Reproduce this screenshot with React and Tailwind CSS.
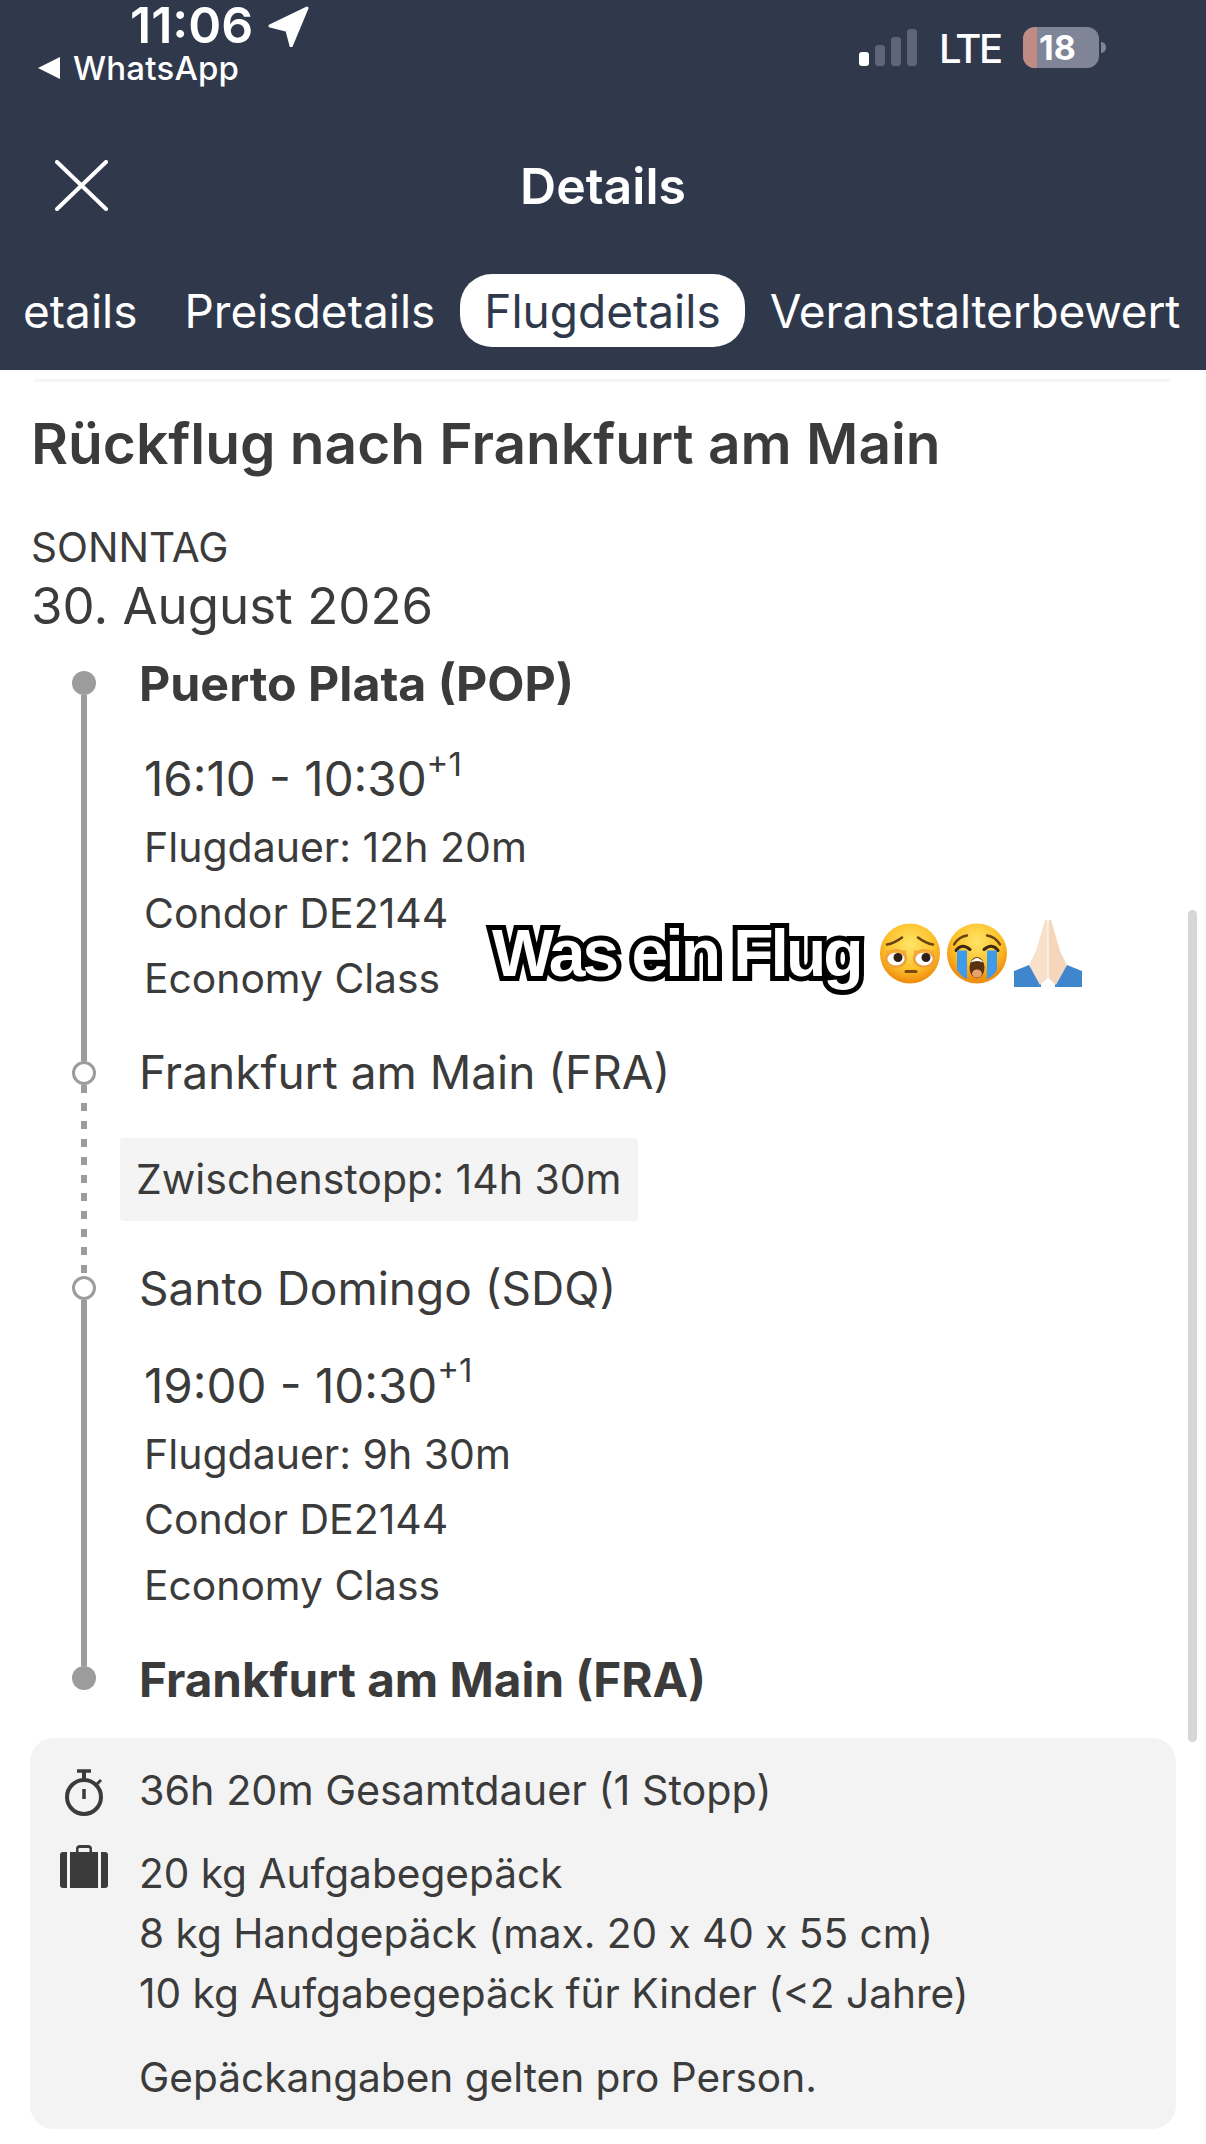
const Pensive = () => (
  <svg viewBox="0 0 60 60" className="w-[60px] h-[61px]">
    <defs>
      <radialGradient id="face1" cx="50%" cy="35%" r="62%">
        <stop offset="0%" stopColor="#ffe566" />
        <stop offset="65%" stopColor="#fcc22c" />
        <stop offset="100%" stopColor="#f0900f" />
      </radialGradient>
    </defs>
    <ellipse cx="30" cy="30" rx="30" ry="30" fill="url(#face1)" />
    <path d="M7 21 Q14 20 22 14" stroke="#6b4210" strokeWidth="2.6" fill="none" strokeLinecap="round" />
    <path d="M53 21 Q46 20 38 14" stroke="#6b4210" strokeWidth="2.6" fill="none" strokeLinecap="round" />
    <ellipse cx="16" cy="35" rx="11" ry="9.5" fill="#eda03e" />
    <ellipse cx="44" cy="35" rx="11" ry="9.5" fill="#eda03e" />
    <ellipse cx="16" cy="35.5" rx="8.5" ry="6.5" fill="#fff" />
    <ellipse cx="44" cy="35.5" rx="8.5" ry="6.5" fill="#fff" />
    <circle cx="18" cy="34" r="4.5" fill="#2e2018" />
    <circle cx="46" cy="34" r="4.5" fill="#2e2018" />
    <path d="M6 31 Q16 27 26 31 V27 H6 Z" fill="#f4ac35" />
    <path d="M34 31 Q44 27 54 31 V27 H34 Z" fill="#f4ac35" />
    <path d="M26 48 H36" stroke="#7a4a10" strokeWidth="3" fill="none" strokeLinecap="round" />
  </svg>
)

const Crying = () => (
  <svg viewBox="0 0 60 60" className="w-[60px] h-[61px]">
    <defs>
      <radialGradient id="face2" cx="50%" cy="30%" r="62%">
        <stop offset="0%" stopColor="#ffe566" />
        <stop offset="65%" stopColor="#fcc02a" />
        <stop offset="100%" stopColor="#f0900f" />
      </radialGradient>
    </defs>
    <ellipse cx="30" cy="30" rx="30" ry="30" fill="url(#face2)" />
    <path d="M7 21 Q12 13 20 12" stroke="#6b4210" strokeWidth="2.4" fill="none" strokeLinecap="round" />
    <path d="M53 21 Q48 13 40 12" stroke="#6b4210" strokeWidth="2.4" fill="none" strokeLinecap="round" />
    <path d="M9 27 Q15 19 23 26" stroke="#3f2810" strokeWidth="3" fill="none" strokeLinecap="round" />
    <path d="M37 26 Q45 19 51 27" stroke="#3f2810" strokeWidth="3" fill="none" strokeLinecap="round" />
    <path d="M10 27 H20 V56 Q13 52 10 46 Z" fill="#3d9be9" />
    <path d="M40 27 H50 V46 Q47 52 40 56 Z" fill="#3d9be9" />
    <ellipse cx="30" cy="44" rx="7.5" ry="10.5" fill="#5a3210" />
    <path d="M23.5 39 Q30 30 36.5 39 Q30 36 23.5 39 Z" fill="#fff" />
    <ellipse cx="30" cy="50" rx="5" ry="4" fill="#e9a06b" />
  </svg>
)

const Pray = () => (
  <svg viewBox="0 0 68 68" className="w-[68px] h-[68px]">
    <path d="M0 68 V52 L15 46 L27 62 V68 Z" fill="#3f86cf" />
    <path d="M68 68 V52 L53 46 L41 62 V68 Z" fill="#3f86cf" />
    <path d="M31 1 Q33 0 33.5 3 V59 L26 66 L15 46 L22 32 Z" fill="#f8e0ca" />
    <path d="M37 1 Q35 0 34.5 3 V59 L42 66 L53 46 L46 32 Z" fill="#f5d6bc" />
  </svg>
)

const Stopwatch = () => (
  <svg viewBox="0 0 38 47" className="w-[38px] h-[47px]" fill="none" stroke="#3b3b3b">
    <circle cx="19" cy="28" r="17" strokeWidth="4" />
    <path d="M12 2 H26" strokeWidth="3.5" />
    <path d="M19 2 V10" strokeWidth="4" />
    <path d="M19 20 V30" strokeWidth="3.5" />
    <path d="M32 15 L36 11" strokeWidth="3" />
  </svg>
)

const Suitcase = () => (
  <svg viewBox="0 0 48 43" className="w-[48px] h-[43px]" fill="#3b3b3b">
    <path d="M16 7 V4 Q16 0 20 0 H28 Q32 0 32 4 V7 H29.5 V4 Q29.5 3 28 3 H20 Q18.5 3 18.5 4 V7 Z" />
    <rect x="10" y="7" width="28" height="36" />
    <path d="M7 7 V43 H3 Q0 43 0 40 V10 Q0 7 3 7 Z" />
    <path d="M41 7 V43 H45 Q48 43 48 40 V10 Q48 7 45 7 Z" />
  </svg>
)

const Ring = () => (
  <div className="w-[24px] h-[24px] rounded-full border-[3px] border-[#9c9c9c] bg-white shrink-0" />
)
const Dot = () => <div className="w-[24px] h-[24px] rounded-full bg-[#9c9c9c] shrink-0" />
const Line = () => <div className="w-[6px] h-[366px] bg-[#9c9c9c]" />

const Leg = ({ from, to, dur, flight, cls, sup, className }) => (
  <div className={className}>
    <div className="text-[47.5px] leading-[66px] text-[#3b3b3b]">
      {from} - {to}
      <sup className="text-[33px] leading-none align-[4px]">{sup}</sup>
    </div>
    <div className="text-[41px] leading-[65.5px] mt-[3px]">{dur}</div>
    <div className="text-[41px] leading-[65.5px]">{flight}</div>
    <div className="text-[40.8px] leading-[65.5px]">{cls}</div>
  </div>
)

export default function App() {
  return (
    <div className="relative w-[1206px] h-[2144px] overflow-hidden bg-white text-[#3b3b3b] font-['Inter',sans-serif]">
      <header className="h-[370px] bg-[#30384c] text-white">
        <div className="relative h-[90px]">
          <div className="absolute left-[130px] top-0 flex items-center">
            <span className="text-[50px] leading-[50px] font-semibold">11:06</span>
            <svg viewBox="0 0 40 40" className="absolute left-[137px] top-[5px] w-[42px] h-[42px]" fill="#fff" stroke="#fff" strokeWidth="3" strokeLinejoin="round">
              <path d="M38 3 L3 20 L19 24 L23 39 Z" />
            </svg>
          </div>
          <div className="absolute left-[38px] top-[49px] flex items-center gap-[13px]">
            <span className="w-0 h-0 border-y-[11px] border-y-transparent border-r-[22px] border-r-white"></span>
            <span className="text-[33px] leading-[38px] font-medium tracking-[0.2px]">WhatsApp</span>
          </div>
          <div className="absolute left-[859px] top-[22px] flex items-end gap-[6px] h-[44px]">
            <span className="w-[10px] h-[14px] rounded-[3px] bg-white"></span>
            <span className="w-[10px] h-[21px] rounded-[3px] bg-[#5e6578]"></span>
            <span className="w-[10px] h-[29px] rounded-[3px] bg-[#5e6578]"></span>
            <span className="w-[10px] h-[37px] rounded-[3px] bg-[#5e6578]"></span>
          </div>
          <div className="absolute left-[939px] top-[26px] text-[40px] leading-[46px] font-medium tracking-[-2.5px]">LTE</div>
          <div className="absolute left-[1023px] top-[27px] w-[76px] h-[41px] rounded-[12px] bg-[#7f8496] overflow-hidden">
            <span className="absolute left-0 top-0 bottom-0 w-[14px] bg-[#c08a85]"></span>
            <span className="absolute left-[16px] top-0 text-[34px] leading-[41px] font-bold">18</span>
          </div>
          <div className="absolute left-[1101px] top-[42px] w-[5px] h-[11px] rounded-r-full bg-[#7f8496]"></div>
        </div>
        <div className="relative mt-[45px] h-[101px] flex items-center justify-center">
          <svg viewBox="0 0 53 51" className="absolute left-[55px] top-[25px] w-[53px] h-[51px]" stroke="#fff" strokeWidth="4" strokeLinecap="round">
            <path d="M2 2 L51 49 M51 2 L2 49" />
          </svg>
          <span className="text-[50px] font-semibold leading-[56px]">Details</span>
        </div>
        <div className="relative h-[134px]">
          <div className="absolute left-0 top-[37px] right-0 flex items-center text-[46px] leading-[73px] whitespace-nowrap">
            <span className="ml-[23px] pt-[2px]">etails</span>
            <span className="ml-[47px] pt-[2px]">Preisdetails</span>
            <span className="ml-[25px] px-[24px] bg-white text-[#30384c] rounded-[32px] h-[73px]"><span className="relative top-[1px]">Flugdetails</span></span>
            <span className="ml-[25px] pt-[2px] tracking-[-0.2px]">Veranstalterbewert</span>
          </div>
        </div>
      </header>

      <main className="pt-[9px]">
        <div className="mx-[35px] h-[3px] bg-[#f6f6f4]"></div>
        <h1 className="mt-[24px] pl-[31px] text-[56.8px] leading-[76px] font-semibold">Rückflug nach Frankfurt am Main</h1>
        <div className="pl-[31px] mt-[41px] text-[40.5px] leading-[50px]">SONNTAG</div>
        <div className="pl-[31px] mt-[3px] text-[51px] leading-[60px]">30. August 2026</div>

        <div className="flex mt-[15px] pl-[72px]">
          <div className="w-[24px] flex flex-col items-center pt-[20px]">
            <Dot />
            <Line />
            <Ring />
            <div className="w-[6px] h-[191px] bg-[repeating-linear-gradient(#9c9c9c_0_8px,transparent_8px_18px)]" />
            <Ring />
            <Line />
            <Dot />
          </div>
          <div className="ml-[43px]">
            <div className="text-[48.3px] leading-[66px] font-bold">Puerto Plata (POP)</div>
            <Leg className="pl-[5px] pt-[29px] pb-[27px]" from="16:10" to="10:30" sup="+1" dur="Flugdauer: 12h 20m" flight="Condor DE2144" cls="Economy Class" />
            <div className="text-[46px] leading-[66px]">Frankfurt am Main (FRA)</div>
            <div className="ml-[-19px] mt-[33px] w-fit rounded-[4px] bg-[#f4f4f4] px-[16px] text-[41px] leading-[83px]">Zwischenstopp: 14h 30m</div>
            <div className="mt-[34px] text-[46px] leading-[66px]">Santo Domingo (SDQ)</div>
            <Leg className="pl-[5px] pt-[32px] pb-[29px]" from="19:00" to="10:30" sup="+1" dur="Flugdauer: 9h 30m" flight="Condor DE2144" cls="Economy Class" />
            <div className="text-[47.6px] leading-[66px] font-bold">Frankfurt am Main (FRA)</div>
          </div>
        </div>

        <section className="mx-[30px] mt-[25px] h-[391px] rounded-[24px] bg-[#f3f3f3] pt-[28px] pl-[30px] flex flex-col">
          <div className="flex items-start">
            <div className="w-[48px] flex justify-center pt-[3px]"><Stopwatch /></div>
            <div className="ml-[31px] text-[41.3px] leading-[48px]">36h 20m Gesamtdauer (1 Stopp)</div>
          </div>
          <div className="flex items-start mt-[28px]">
            <div className="w-[48px] pt-[1px]"><Suitcase /></div>
            <div className="ml-[31px] text-[40.6px] leading-[60px]">
              <div>20 kg Aufgabegepäck</div>
              <div className="[font-feature-settings:'calt'_0]">8 kg Handgepäck (max. 20 x 40 x 55 cm)</div>
              <div>10 kg Aufgabegepäck für Kinder (&lt;2 Jahre)</div>
              <div className="mt-[24px]">Gepäckangaben gelten pro Person.</div>
            </div>
          </div>
        </section>
      </main>

      {/* sticker text and scrollbar lie over the page */}
      <div className="absolute left-[492px] top-[915px] flex items-start">
        <span className="text-[66px] leading-[76px] font-bold tracking-[-3px] text-white font-['Liberation_Sans',sans-serif] [-webkit-text-stroke:10px_#000] [paint-order:stroke_fill]">Was ein Flug</span>
        <div className="absolute left-[388px] top-[4px] flex items-start gap-[7px]">
          <div className="pt-[4px]"><Pensive /></div>
          <div className="pt-[4px]"><Crying /></div>
          <Pray />
        </div>
      </div>
      <div className="absolute left-[1188px] top-[910px] w-[9px] h-[832px] rounded-full bg-[#d6d6d6]" />
    </div>
  )
}
